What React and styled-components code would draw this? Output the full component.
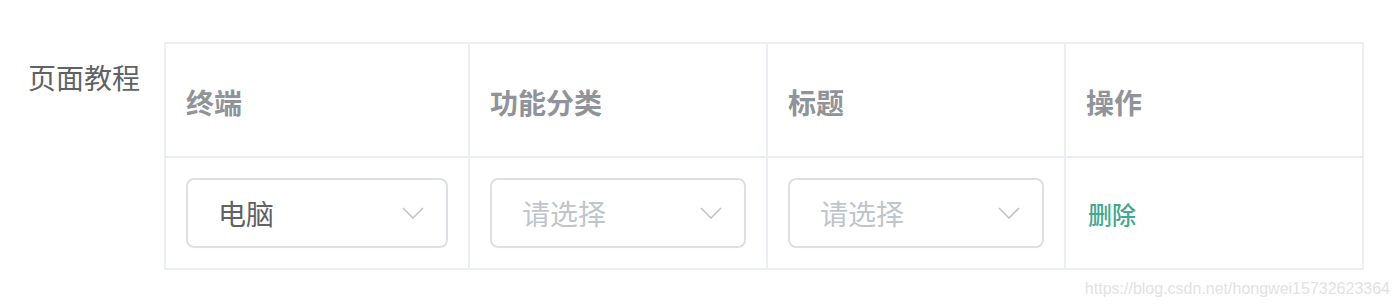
import React from "react"
import styled, { createGlobalStyle } from "styled-components"

const GlobalStyle = createGlobalStyle`
  html, body {
    margin: 0;
    padding: 0;
    background: #fff;
  }
  body {
    font-family: "Noto Sans CJK SC", "Noto Sans", "Liberation Sans", sans-serif;
  }
`

const columns = [
  { title: "终端", width: 304 },
  { title: "功能分类", width: 298 },
  { title: "标题", width: 298 },
  { title: "操作", width: 298 },
]

const rows = [
  { terminal: "电脑", category: "", title: "" },
]

const Page = styled.div`
  width: 1400px;
  height: 308px;
  box-sizing: border-box;
  padding-top: 42px;
  display: flex;
  flex-direction: column;
`

const FormItem = styled.div`
  display: flex;
  align-items: flex-start;
  padding-left: 28px;
`

const Label = styled.div`
  width: 136px;
  margin-top: 15px;
  font-size: 28px;
  line-height: 40px;
  color: #606266;
`

const Table = styled.div`
  display: grid;
  grid-template-columns: ${p => p.$cols.map(c => c.width + "px").join(" ")};
  width: 1200px;
  box-sizing: border-box;
  border-top: 2px solid #ebeef5;
  border-left: 2px solid #ebeef5;
`

const HeadCell = styled.div`
  box-sizing: border-box;
  height: 114px;
  padding: 38px 20px 0 20px;
  border-right: 2px solid #ebeef5;
  border-bottom: 2px solid #ebeef5;
  font-size: 28px;
  line-height: 40px;
  font-weight: 700;
  color: #909399;
`

const BodyCell = styled.div`
  box-sizing: border-box;
  height: 112px;
  padding: 0 20px;
  display: flex;
  align-items: center;
  border-right: 2px solid #ebeef5;
  border-bottom: 2px solid #ebeef5;
`

const SelectBox = styled.div`
  width: 100%;
  height: 70px;
  box-sizing: border-box;
  border: 2px solid #dcdfe6;
  border-radius: 8px;
  padding: 0 22px 0 30px;
  display: flex;
  align-items: center;
  justify-content: space-between;
  font-size: 28px;
  color: ${p => (p.$empty ? "#c0c4cc" : "#606266")};
`

const Chevron = styled.svg`
  width: 22px;
  height: 12px;
  flex-shrink: 0;
`

const DeleteLink = styled.span`
  font-size: 24px;
  font-weight: 500;
  color: #42a78f;
  padding-left: 2px;
  cursor: pointer;
`

const Watermark = styled.div`
  margin-top: 10px;
  padding-right: 10px;
  text-align: right;
  font-family: "Liberation Sans", Arial, sans-serif;
  font-size: 16px;
  line-height: 18px;
  color: #e2e2e2;
`

const Select = ({ value }) => (
  <SelectBox $empty={!value}>
    <span>{value || "请选择"}</span>
    <Chevron viewBox="0 0 22 12">
      <polyline points="1,1 11,11 21,1" fill="none" stroke="#c0c4cc" strokeWidth="1.6" />
    </Chevron>
  </SelectBox>
)

const App = () => {
  return (
    <Page>
      <GlobalStyle />
      <FormItem>
        <Label>页面教程</Label>
        <Table $cols={columns}>
          {columns.map(col => (
            <HeadCell key={col.title}>{col.title}</HeadCell>
          ))}
          {rows.map((row, i) => (
            <React.Fragment key={i}>
              <BodyCell><Select value={row.terminal} /></BodyCell>
              <BodyCell><Select value={row.category} /></BodyCell>
              <BodyCell><Select value={row.title} /></BodyCell>
              <BodyCell><DeleteLink>删除</DeleteLink></BodyCell>
            </React.Fragment>
          ))}
        </Table>
      </FormItem>
      <Watermark>https://blog.csdn.net/hongwei15732623364</Watermark>
    </Page>
  )
}

export default App
